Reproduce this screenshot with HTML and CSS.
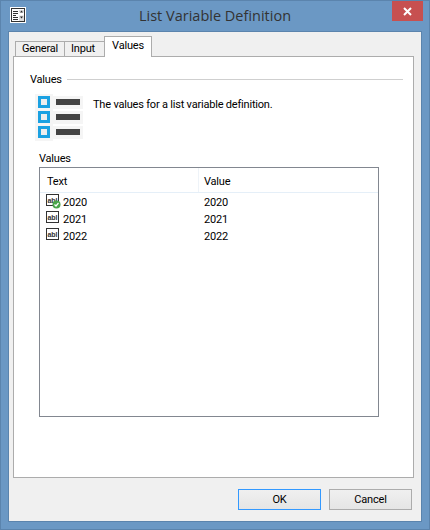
FILE: index.html
```html
<!DOCTYPE html>
<html>
<head>
  <link rel="stylesheet" href="styles.css">
</head>
<body>

<div class="window">
  <div class="titlebar">
    <svg class="app-icon" width="16" height="16" viewBox="0 0 16 16">
      <rect x="0" y="0" width="16" height="16" fill="#fff"/>
      <rect x="1.500" y="1.500" width="13" height="13" fill="#fff" stroke="#333"/>
      <path d="M3 4.500h5M3 6.500h5M3 8.500h3M3 10.500h5M3 12.500h5" stroke="#333"/>
      <path d="M9 3h5v2.500H9zM9 8.500h5V14H9z" fill="#ddd"/>
      <path d="M10 5.500h3l-1.500-2zM10 9.500h3l-1.500 2z" fill="#222"/>
    </svg>
    <div class="title">List Variable Definition</div>
    <div class="close">
      <svg width="9" height="9" viewBox="0 0 9 9"><path d="M1 1l7 7M8 1l-7 7" stroke="#fff" stroke-width="2"/></svg>
    </div>
  </div>

  <div class="client">
    <div class="tabs">
      <div class="tab tab-general">General</div>
      <div class="tab tab-input">Input</div>
      <div class="tab tab-values active">Values</div>
    </div>

    <div class="panel">
      <div class="group-head">
        <span>Values</span>
        <div class="group-line"></div>
      </div>

      <div class="intro">
        <svg class="list-icon" width="48" height="48" viewBox="0 0 48 48">
          <rect x="0" y="0" width="18" height="47" fill="#f5f5f5"/>
          <rect x="18" y="2" width="30" height="13" fill="#f5f5f5"/>
          <rect x="18" y="17" width="30" height="13" fill="#f5f5f5"/>
          <rect x="18" y="32" width="30" height="13" fill="#f5f5f5"/>
          <g fill="#eeeeee" stroke="#1ba1e2" stroke-width="3">
            <rect x="4.500" y="3.500" width="9" height="9"/>
            <rect x="4.500" y="18.500" width="9" height="9"/>
            <rect x="4.500" y="33.500" width="9" height="9"/>
          </g>
          <g fill="#434343">
            <rect x="21" y="5" width="24" height="6"/>
            <rect x="21" y="20" width="24" height="6"/>
            <rect x="21" y="35" width="24" height="6"/>
          </g>
        </svg>
        <p class="intro-text">The values for a list variable definition.</p>
      </div>

      <div class="list-label">Values</div>

      <div class="list">
        <div class="list-head">
          <div class="col-text">Text</div>
          <div class="col-value">Value</div>
        </div>
        <div class="row">
          <div class="col-text">
            <svg class="abl" width="16" height="16" viewBox="0 0 16 16">
              <use href="#abl-icon"/>
              <circle cx="11.500" cy="10.500" r="4" fill="#4aa64a"/>
              <path d="M9.500 10.500l1.500 1.500 2.500-3" fill="none" stroke="#fff" stroke-width="1.200"/>
            </svg>
            2020
          </div>
          <div class="col-value">2020</div>
        </div>
        <div class="row">
          <div class="col-text">
            <svg class="abl" width="16" height="16" viewBox="0 0 16 16"><use href="#abl-icon"/></svg>
            2021
          </div>
          <div class="col-value">2021</div>
        </div>
        <div class="row">
          <div class="col-text">
            <svg class="abl" width="16" height="16" viewBox="0 0 16 16"><use href="#abl-icon"/></svg>
            2022
          </div>
          <div class="col-value">2022</div>
        </div>
      </div>
    </div>

    <div class="buttons">
      <div class="btn default">OK</div>
      <div class="btn">Cancel</div>
    </div>
  </div>
</div>

<svg width="0" height="0" class="defs">
  <defs>
    <g id="abl-icon">
      <rect x="1.500" y="0.500" width="12" height="11" fill="#fff" stroke="#333"/>
      <text x="7.500" y="8.500" class="abl-text">abl</text>
    </g>
  </defs>
</svg>

</body>
</html>
```

FILE: styles.css
```css
html, body {
  margin: 0;
  height: 100%;
}

body {
  font-family: Roboto, "Liberation Sans", sans-serif;
  font-size: 11px;
  letter-spacing: -0.2px;
  color: #000;
  overflow: hidden;
}

.window {
  box-sizing: border-box;
  width: 430px;
  height: 530px;
  background: #6b98c4;
  border: 1px solid #5b84ad;
  padding: 0 7px 7px 7px;
  display: flex;
  flex-direction: column;
}

.titlebar {
  height: 30px;
  flex: none;
  position: relative;
  display: flex;
  justify-content: center;
}

.app-icon {
  position: absolute;
  left: 2px;
  top: 6px;
}

.title {
  font-family: "Open Sans", sans-serif;
  font-size: 14.500px;
  letter-spacing: 0;
  color: #333;
  line-height: 30px;
}

.close {
  position: absolute;
  right: -1px;
  top: 0;
  width: 31px;
  height: 20px;
  background: #c75050;
  display: flex;
  align-items: center;
  justify-content: center;
}

.client {
  flex: 1;
  background: #f0f0f0;
  border: 1px solid #5b84ad;
  display: flex;
  flex-direction: column;
  padding: 4px 7px 0 4px;
}

.tabs {
  display: flex;
  align-items: flex-end;
  height: 21px;
  padding-left: 2px;
  margin-bottom: -1px;
  position: relative;
  z-index: 1;
}

.tab {
  box-sizing: border-box;
  height: 15px;
  line-height: 14px;
  text-align: center;
  background: #f0f0f0;
  border: 1px solid #acacac;
  border-bottom: none;
  margin-bottom: 1px;
  margin-right: -1px;
}

.tab-general {
  width: 50px;
}

.tab-input {
  width: 41px;
  padding-right: 3px;
}

.tab.active {
  height: 21px;
  line-height: 18px;
  width: 48px;
  background: #fff;
  margin-bottom: 0;
}

.panel {
  box-sizing: border-box;
  height: 422px;
  background: #fff;
  border: 1px solid #acacac;
  padding: 14px 10px 0 16px;
}

.group-head {
  display: flex;
  align-items: center;
  gap: 5px;
  height: 16px;
}

.group-line {
  flex: 1;
  height: 1px;
  background: #cfcfcf;
}

.intro {
  display: flex;
  margin-top: 7px;
  padding-left: 5px;
}

.list-icon {
  flex: none;
}

.intro-text {
  margin: 0 0 0 10px;
  line-height: 16px;
  padding-top: 3px;
}

.list-label {
  margin: 8px 0 0 9px;
  line-height: 18px;
  height: 16px;
}

.list {
  box-sizing: border-box;
  width: 340px;
  height: 250px;
  margin: 1px 0 0 9px;
  border: 1px solid #828790;
}

.list-head {
  display: flex;
  height: 24px;
  line-height: 27px;
  border-bottom: 1px solid #e5eff8;
  margin-bottom: 1px;
}

.list-head .col-text {
  border-right: 1px solid #eef3f8;
  align-items: flex-start;
}

.row {
  display: flex;
  height: 17px;
  line-height: 17px;
}

.col-text {
  box-sizing: border-box;
  width: 159px;
  padding-left: 7px;
  display: flex;
  align-items: center;
  gap: 2px;
}

.col-value {
  padding-left: 5px;
}

.abl {
  flex: none;
  margin: -2px 0 0 -2px;
}

.abl-text {
  font-family: "Liberation Sans", sans-serif;
  font-size: 7px;
  font-weight: bold;
  letter-spacing: 0;
  fill: #333;
  text-anchor: middle;
}

.buttons {
  display: flex;
  justify-content: flex-end;
  gap: 8px;
  padding: 11px 2px 0 0;
}

.btn {
  box-sizing: border-box;
  width: 83px;
  height: 21px;
  line-height: 19px;
  text-align: center;
  border: 1px solid #acacac;
  background: linear-gradient(#f0f0f0, #e5e5e5);
}

.btn.default {
  border-color: #3399ff;
}

.defs {
  display: block;
  height: 0;
}
```
